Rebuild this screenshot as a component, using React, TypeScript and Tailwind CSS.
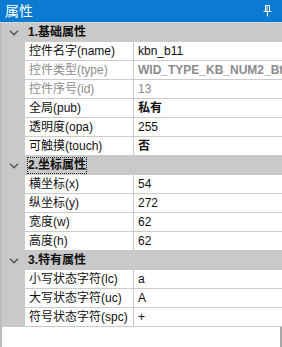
import { ReactNode } from 'react'

type Row = {
  label: string
  value: string
  dim?: boolean
  bold?: boolean
}

type Section = {
  title: string
  focused?: boolean
  rows: Row[]
}

const sections: Section[] = [
  {
    title: '1.基础属性',
    rows: [
      { label: '控件名字(name)', value: 'kbn_b11' },
      { label: '控件类型(type)', value: 'WID_TYPE_KB_NUM2_Btn', dim: true, bold: true },
      { label: '控件序号(id)', value: '13', dim: true },
      { label: '全局(pub)', value: '私有', bold: true },
      { label: '透明度(opa)', value: '255' },
      { label: '可触摸(touch)', value: '否', bold: true },
    ],
  },
  {
    title: '2.坐标属性',
    focused: true,
    rows: [
      { label: '横坐标(x)', value: '54' },
      { label: '纵坐标(y)', value: '272' },
      { label: '宽度(w)', value: '62' },
      { label: '高度(h)', value: '62' },
    ],
  },
  {
    title: '3.特有属性',
    rows: [
      { label: '小写状态字符(lc)', value: 'a' },
      { label: '大写状态字符(uc)', value: 'A' },
      { label: '符号状态字符(spc)', value: '+' },
    ],
  },
]

function Chevron() {
  return (
    <svg width="10" height="6" viewBox="0 0 10 6" className="block">
      <path d="M1 0.8 L5 4.8 L9 0.8" fill="none" stroke="#505050" strokeWidth="1.3" />
    </svg>
  )
}

function PinIcon() {
  return (
    <svg width="9" height="12" viewBox="0 0 9 12" className="block">
      <path d="M2 0.5 H7 M2.5 0.5 V6 M6.5 0.5 V6 M0.5 6.5 H8.5 M4.5 6.5 V11.5 M4 0.5 V6" fill="none" stroke="#ffffff" strokeWidth="1" />
    </svg>
  )
}

function Header({ title, focused }: { title: string; focused?: boolean }): ReactNode {
  return (
    <div className="flex h-[19px] items-center bg-[#c9c9c9]">
      <div className="flex w-[23px] justify-center pl-[1px]">
        <Chevron />
      </div>
      <span
        className={`ml-[3px] font-bold leading-[15px] text-[#111] ${
          focused ? 'outline outline-1 outline-dotted outline-[#222] outline-offset-[0px]' : ''
        }`}
      >
        {title}
      </span>
    </div>
  )
}

function PropRow({ row }: { row: Row }) {
  const tone = row.dim ? 'text-[#8c8c8c]' : 'text-[#111]'
  return (
    <div className="flex h-[19px]">
      <div className="w-[23px] shrink-0 bg-[#c9c9c9]" />
      <div className={`flex w-[109px] shrink-0 items-center overflow-hidden border-b border-r border-[#cacaca] bg-white pl-[4px] whitespace-nowrap ${tone}`}>
        {row.label}
      </div>
      <div
        className={`flex min-w-0 flex-1 items-center overflow-hidden border-b border-[#cacaca] bg-white pl-[4px] whitespace-nowrap ${tone} ${
          row.bold ? 'font-bold' : ''
        }`}
      >
        {row.value}
      </div>
    </div>
  )
}

export default function App() {
  return (
    <div
      className="flex h-[347px] w-[282px] flex-col overflow-hidden bg-white text-[12px]"
      style={{ fontFamily: '"Liberation Sans", "Noto Sans CJK SC", sans-serif' }}
    >
      {/* Title bar */}
      <div className="flex h-[22px] shrink-0 items-center justify-between bg-[#0a7bd0] pl-[5px] pr-[10px] text-[14px] text-white">
        <span className="leading-none">属性</span>
        <PinIcon />
      </div>
      <div className="h-[1px] shrink-0 bg-[#d8d8d8]" />

      <div className="flex flex-1 border-l-2 border-r-2 border-l-[#bdbdbd] border-r-[#a8a8a8]">
        <div className="flex flex-1 flex-col">
          {sections.map(sec => (
            <div key={sec.title}>
              <Header title={sec.title} focused={sec.focused} />
              {sec.rows.map(r => (
                <PropRow key={r.label} row={r} />
              ))}
            </div>
          ))}
        </div>
      </div>
    </div>
  )
}
